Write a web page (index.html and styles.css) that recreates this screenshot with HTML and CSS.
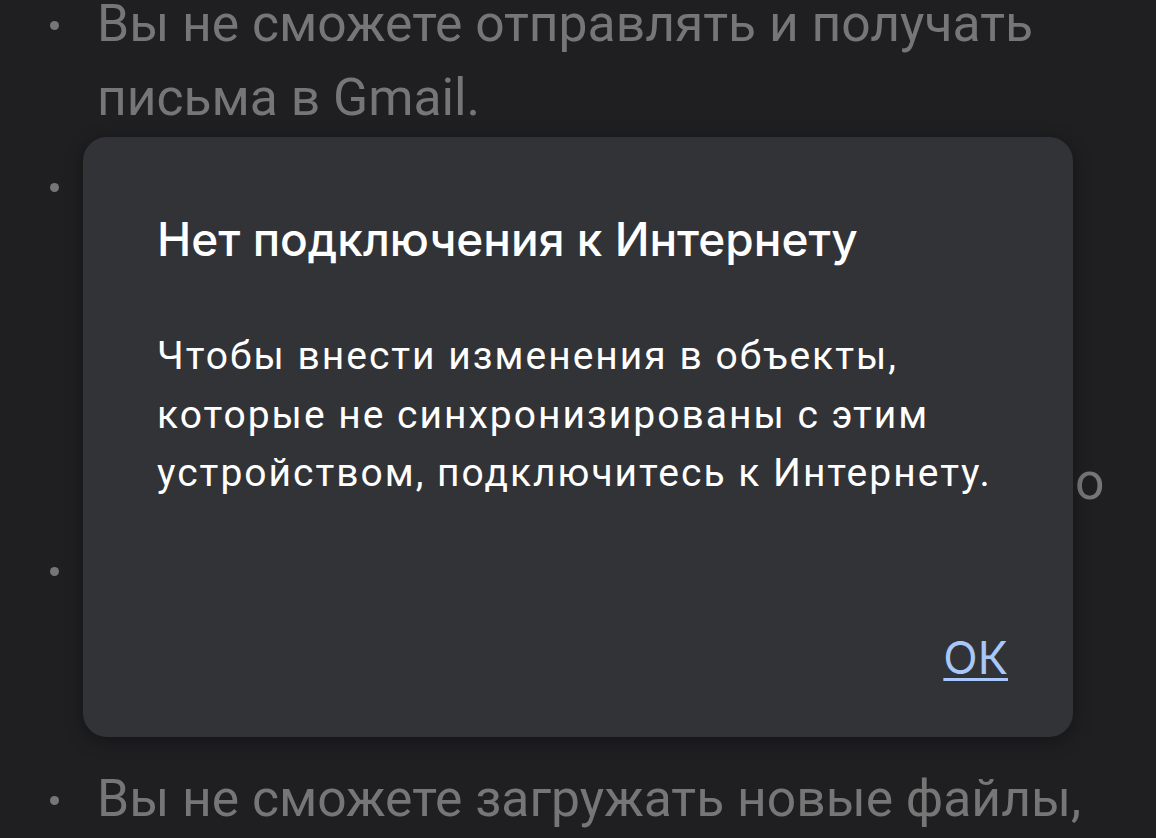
FILE: index.html
```html
<!DOCTYPE html>
<html lang="ru">
<head>
    <meta charset="UTF-8">
    <meta name="viewport" content="width=device-width, initial-scale=1.0">
    <title>Нет подключения</title>
    <link rel="stylesheet" href="styles.css">
</head>
<body>
    <ul class="notes">
        <li>Вы не сможете отправлять и получать письма в Gmail.</li>
        <li>Вы не сможете открывать файлы,<br>которые не сохранены на этом<br>устройстве, и просматривать<br>новые изменения в них. Все<br><span class="note-run">правки сохранятся, когда вы снова</span>о</li>
        <li>подключитесь к сети. Документы<br>будут доступны для просмотра.</li>
        <li>Вы не сможете загружать новые файлы,</li>
    </ul>

    <div class="overlay">
        <div class="dialog">
            <h2 class="dialog-title">Нет подключения к Интернету</h2>
            <p class="dialog-text">Чтобы внести изменения в объекты, которые не синхронизированы с этим устройством, подключитесь к Интернету.</p>
            <div class="dialog-actions">
                <a href="#" class="dialog-btn">ОК</a>
            </div>
        </div>
    </div>
</body>
</html>
```

FILE: styles.css
```css
body {
    margin: 0;
    height: 100vh;
    overflow: hidden;
    background-color: #1f1f21;
    font-family: Roboto, "Noto Sans", sans-serif;
    position: relative;
}

.notes {
    margin: -13px 0 0;
    padding: 0 0 0 97px;
    list-style: none;
    color: #767676;
    font-size: 51.6px;
    line-height: 74px;
}

.notes li {
    position: relative;
    margin-bottom: 14px;
    white-space: nowrap;
}

.notes li:nth-child(3) {
    margin-bottom: 81px;
}

.notes li::before {
    content: "";
    position: absolute;
    left: -47px;
    top: 34px;
    width: 9px;
    height: 9px;
    border-radius: 50%;
    background-color: #767676;
}

.notes li:first-child {
    white-space: normal;
    width: 960px;
}

.note-run {
    display: inline-block;
    width: 978px;
    overflow: hidden;
    vertical-align: top;
}

.overlay {
    position: absolute;
    left: 83px;
    top: 137px;
}

.dialog {
    width: 990px;
    height: 600px;
    box-sizing: border-box;
    padding: 72px 60px 0 74px;
    background-color: #323337;
    border-radius: 24px;
    box-shadow: 0 4px 18px rgba(0, 0, 0, 0.35);
    display: flex;
    flex-direction: column;
}

.dialog-title {
    margin: 0;
    color: #ffffff;
    font-family: Inter, "Open Sans", sans-serif;
    font-weight: 500;
    font-size: 46px;
    line-height: 60px;
}

.dialog-text {
    margin: 58px 0 0;
    color: #ffffff;
    font-size: 39px;
    line-height: 58.5px;
    letter-spacing: 2px;
}

.dialog-actions {
    margin-top: auto;
    margin-bottom: 52px;
    padding-right: 5px;
    display: flex;
    justify-content: flex-end;
}

.dialog-btn {
    color: #a8c7fa;
    font-family: Inter, "Open Sans", sans-serif;
    font-size: 45px;
    text-decoration-thickness: 3px;
    text-underline-offset: 4px;
}
```
